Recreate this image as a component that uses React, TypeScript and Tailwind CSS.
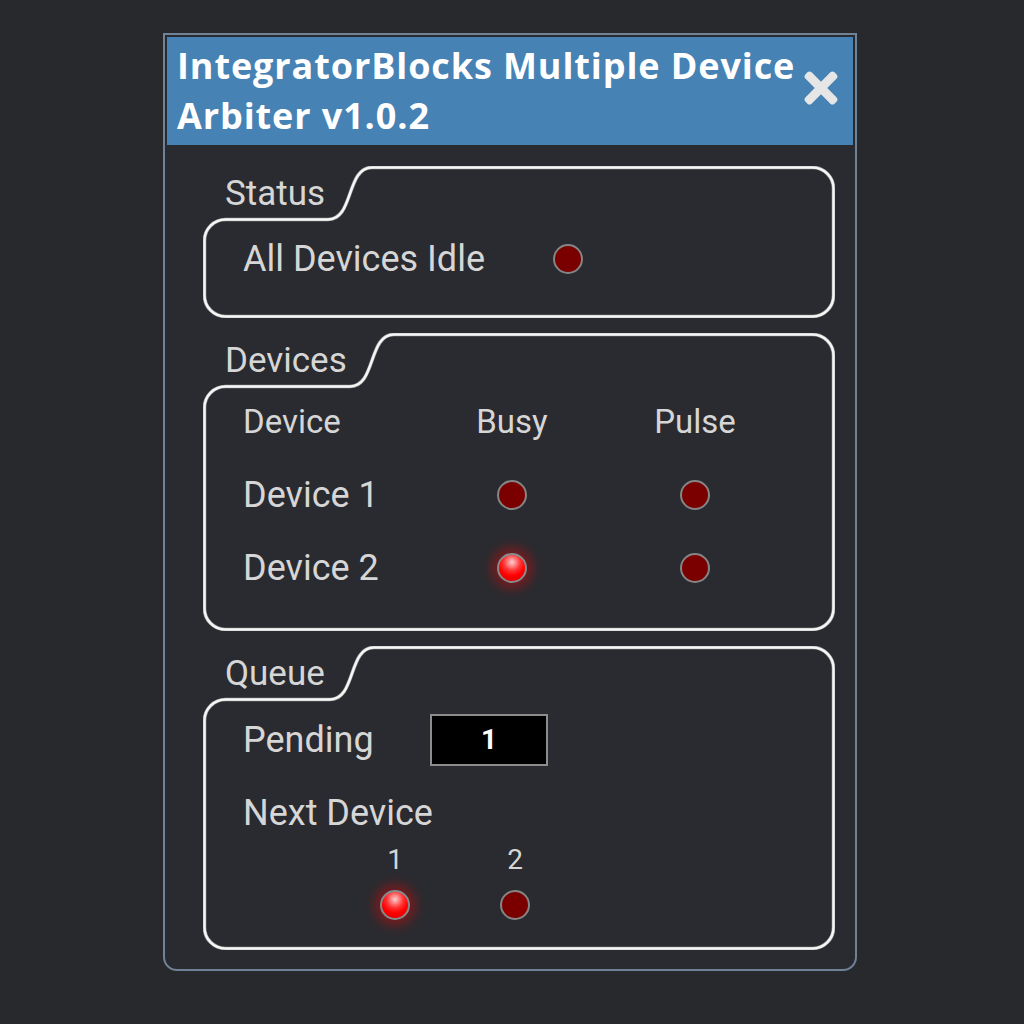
import React from "react";
import { FaTimes } from "react-icons/fa";

const Led = ({ on = false }: { on?: boolean }) =>
  on ? (
    <span className="block w-[30px] h-[30px] rounded-full border-2 border-[#8a8a8a] bg-[radial-gradient(circle_at_50%_28%,#ffd0d0_0%,#ff3030_38%,#ff0000_60%,#d00000_100%)] shadow-[0_0_12px_5px_rgba(255,0,0,0.4)]" />
  ) : (
    <span className="block w-[30px] h-[30px] rounded-full border-2 border-[#858585] bg-[#7a0000]" />
  );

// outline of a group box with the S-shaped label tab
const Frame = ({ h, tab }: { h: number; tab: number }) => {
  const w = 632;
  const s = 1.5;
  const base = 53.5;
  const r = 21;
  const c1 = tab + 44;
  const d = [
    `M ${s} ${base + r}`,
    `A ${r} ${r} 0 0 1 ${s + r} ${base}`,
    `L ${tab} ${base}`,
    `C ${tab + 26} ${base} ${c1 - 26} ${s} ${c1} ${s}`,
    `L ${w - s - r} ${s}`,
    `A ${r} ${r} 0 0 1 ${w - s} ${s + r}`,
    `L ${w - s} ${h - s - r}`,
    `A ${r} ${r} 0 0 1 ${w - s - r} ${h - s}`,
    `L ${s + r} ${h - s}`,
    `A ${r} ${r} 0 0 1 ${s} ${h - s - r}`,
    "Z",
  ].join(" ");
  return (
    <svg width={w} height={h} className="absolute inset-0 pointer-events-none">
      <path d={d} fill="none" stroke="#9a9a9a" strokeWidth={3.6} />
      <path d={d} fill="none" stroke="#f6f6f6" strokeWidth={2.4} />
    </svg>
  );
};

const Group = ({
  label,
  h,
  tab,
  className,
  children,
}: {
  label: string;
  h: number;
  tab: number;
  className: string;
  children: React.ReactNode;
}) => (
  <section className={`relative w-[632px] ${className}`}>
    <Frame h={h} tab={tab} />
    <div className="h-[51px] pl-[22px] pt-[5px] flex items-center text-[35px] text-[#d6d6d6]">{label}</div>
    <div className="pl-[40px]">{children}</div>
  </section>
);

export default function App() {
  return (
    <div className="min-h-screen bg-[#28292d] pl-[163px] pt-[33px] font-['Roboto',sans-serif]">
      <div className="w-[694px] border-2 border-[#6f8296] rounded-b-[14px] p-[2px] pb-[19px] bg-[#2a2b30]">
        <div className="h-[108px] bg-[#4682b4] flex items-center justify-between pl-[10px] pr-[8px]">
          <h1 className="font-['Open_Sans',sans-serif] font-bold text-[36px] leading-[50px] text-white tracking-[0.9px]">
            IntegratorBlocks Multiple Device
            <br />
            Arbiter v1.0.2
          </h1>
          <button className="text-[#e6e6e6] mt-[-6px]">
            <FaTimes className="w-[48px] h-[48px]" />
          </button>
        </div>

        <div className="pt-[21px] pl-[36px] flex flex-col gap-[15px]">
          <Group label="Status" h={152} tab={125} className="h-[152px]">
            <div className="h-[84px] flex items-center text-[36px] text-[#d6d6d6]">
              <span className="w-[310px]">All Devices Idle</span>
              <Led />
            </div>
          </Group>

          <Group label="Devices" h={298} tab={147} className="h-[298px]">
            <div className="mt-[1px] grid grid-cols-[199px_140px_226px] auto-rows-[73px] items-center text-[#d6d6d6]">
              <span className="text-[33px]">Device</span>
              <span className="text-[33px] justify-self-center">Busy</span>
              <span className="text-[33px] justify-self-center">Pulse</span>

              <span className="text-[36px]">Device 1</span>
              <span className="justify-self-center">
                <Led />
              </span>
              <span className="justify-self-center">
                <Led />
              </span>

              <span className="text-[36px]">Device 2</span>
              <span className="justify-self-center">
                <Led on />
              </span>
              <span className="justify-self-center">
                <Led />
              </span>
            </div>
          </Group>

          <Group label="Queue" h={304} tab={127} className="h-[304px]">
            <div className="h-[86px] flex items-center text-[36px] text-[#d6d6d6]">
              <span className="w-[187px]">Pending</span>
              <div className="w-[118px] h-[52px] bg-black border-2 border-[#8c8c8c] flex items-center justify-center text-white text-[28px] font-bold">
                1
              </div>
            </div>
            <div className="h-[58px] pt-[2px] flex items-center text-[36px] text-[#d6d6d6]">Next Device</div>
            <div className="ml-[92px] grid grid-cols-[120px_120px] justify-items-center text-[#d6d6d6]">
              <span className="h-[38px] flex items-center text-[28px]">1</span>
              <span className="h-[38px] flex items-center text-[28px]">2</span>
              <span className="h-[52px] flex items-center">
                <Led on />
              </span>
              <span className="h-[52px] flex items-center">
                <Led />
              </span>
            </div>
          </Group>
        </div>
      </div>
    </div>
  );
}
